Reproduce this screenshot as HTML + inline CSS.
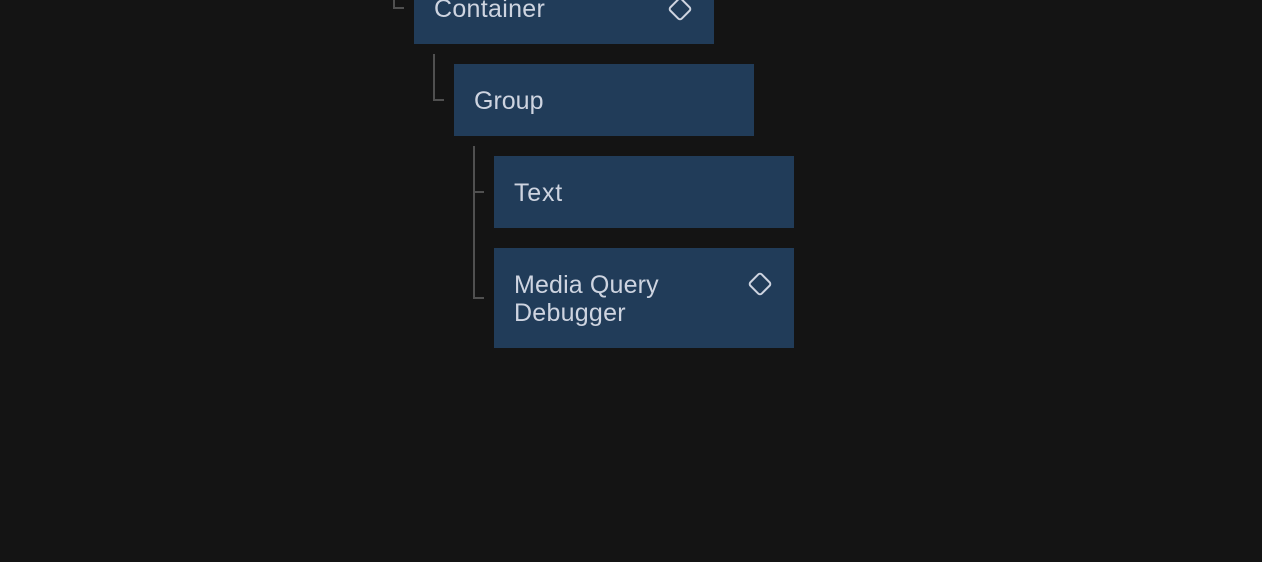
<!DOCTYPE html>
<html>
<head>
<meta charset="utf-8">
<style>
html,body{margin:0;padding:0;background:#141414;}
body{width:1262px;height:562px;overflow:hidden;position:relative;font-family:"Liberation Sans",sans-serif;color:#ced4e0;font-size:25px;line-height:28px;}
.b{position:absolute;background:#213c59;width:300px;}
.t{position:absolute;white-space:nowrap;}
.l{position:absolute;background:#505050;}
svg{position:absolute;overflow:visible;}
</style>
</head>
<body>
<div class="l" style="left:393px;top:0;width:2px;height:9px"></div>
<div class="l" style="left:393px;top:7px;width:11px;height:2px"></div>
<div class="b" style="left:414px;top:-28px;height:72px"></div>
<div class="t" style="left:434px;top:-5px;letter-spacing:.3px">Container</div>
<svg style="left:668px;top:-3px" width="24" height="24" viewBox="0 0 24 24"><rect x="4" y="4" width="16" height="16" rx="2.5" transform="rotate(45 12 12)" fill="none" stroke="#ced4e0" stroke-width="2"/></svg>

<div class="l" style="left:433px;top:54px;width:2px;height:47px"></div>
<div class="l" style="left:433px;top:99px;width:11px;height:2px"></div>
<div class="b" style="left:454px;top:64px;height:72px"></div>
<div class="t" style="left:474px;top:87px">Group</div>

<div class="l" style="left:473px;top:146px;width:2px;height:153px"></div>
<div class="l" style="left:473px;top:191px;width:11px;height:2px"></div>
<div class="l" style="left:473px;top:297px;width:11px;height:2px"></div>
<div class="b" style="left:494px;top:156px;height:72px"></div>
<div class="t" style="left:514px;top:179px;letter-spacing:.8px">Text</div>

<div class="b" style="left:494px;top:248px;height:100px"></div>
<div class="t" style="left:514px;top:271px;letter-spacing:.15px">Media Query<br><span style="letter-spacing:.25px">Debugger</span></div>
<svg style="left:748px;top:272px" width="24" height="24" viewBox="0 0 24 24"><rect x="4" y="4" width="16" height="16" rx="2.5" transform="rotate(45 12 12)" fill="none" stroke="#ced4e0" stroke-width="2"/></svg>
</body>
</html>
